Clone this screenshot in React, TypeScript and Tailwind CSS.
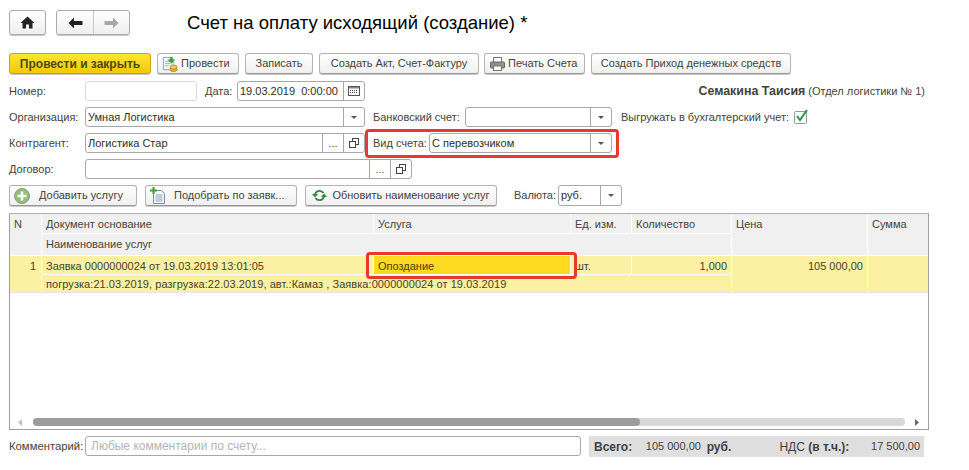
import type { ReactNode } from 'react'

function Btn({ w, children, className = '' }: { w: string; children: ReactNode; className?: string }) {
  return (
    <div className={`${w} h-full flex items-center justify-center gap-[3px] shrink-0 whitespace-nowrap rounded-[3px] border border-[#b4b4b4] border-b-[#999] bg-gradient-to-b from-white to-[#f0f0f0] shadow-[0_1px_0_#c8c8c8] text-[#44443a] ${className}`}>
      {children}
    </div>
  )
}

function Label({ w, children, className = '' }: { w: string; children: ReactNode; className?: string }) {
  return <div className={`${w} shrink-0 text-[#44443a] leading-[20px] whitespace-nowrap ${className}`}>{children}</div>
}

function Arrow() {
  return (
    <svg width="8" height="5" viewBox="0 0 8 5">
      <path d="M1 1h6L4 4z" fill="#555" />
    </svg>
  )
}

function CopyIcon() {
  return (
    <svg width="10" height="10" viewBox="0 0 10 10" fill="none" stroke="#444">
      <rect x="3.500" y="0.500" width="6" height="6" fill="white" />
      <rect x="0.500" y="3.500" width="6" height="6" fill="white" />
    </svg>
  )
}

function CalendarIcon() {
  return (
    <svg width="12" height="10" viewBox="0 0 12 10">
      <rect x="0.500" y="0.500" width="11" height="9" fill="white" stroke="#555" />
      <rect x="1" y="1" width="10" height="1.500" fill="#888" />
      <path d="M2 4h1v1H2zM4 4h1v1H4zM6 4h1v1H6zM8 4h1v1H8zM2 6h1v1H2zM4 6h1v1H4zM6 6h1v1H6zM8 6h1v1H8z" fill="#444" />
    </svg>
  )
}

// input with the small square buttons on its right edge
function Field({ w, text, parts = [], placeholder, light }: { w: string; text?: string; parts?: ReactNode[]; placeholder?: string; light?: boolean }) {
  return (
    <div className={`${w} h-full flex shrink-0 rounded-[3px] border bg-white ${light ? 'border-[#dcdcdc]' : 'border-[#a8a8a8]'}`}>
      <div className="flex-1 min-w-0 pl-[2px] leading-[18px] text-[#2f2f28] whitespace-pre overflow-hidden">
        {text}
        {placeholder && <span className="pl-[3px] text-[12px] text-[#b4b4b4]">{placeholder}</span>}
      </div>
      {parts.map((p, i) => (
        <div key={i} className="w-[21px] shrink-0 flex items-center justify-center border-l border-[#a8a8a8]">
          {p}
        </div>
      ))}
    </div>
  )
}

const dots = <span className="text-[#555] leading-[24px]">...</span>

function HomeIcon() {
  return (
    <svg width="15" height="13" viewBox="0 0 15 13">
      <path d="M7.500 0.500L0.500 7h2v5.500h3.500V8.500h3v4h3.500V7h2z" fill="#222" />
    </svg>
  )
}

function PostIcon() {
  return (
    <svg width="16" height="16" viewBox="0 0 18 18">
      <path d="M1.500 1.500h8l3 3v11h-11z" fill="#f4f8fc" stroke="#8a9bb0" />
      <path d="M3.500 6h6M3.500 8.500h6M3.500 11h4" stroke="#9ab" />
      <path d="M9 1h3v3h3l-4.500 4.500L6 4h3z" fill="#3f9e3a" />
      <ellipse cx="13" cy="15" rx="4" ry="2.500" fill="#e3b52e" stroke="#b78a14" />
      <ellipse cx="13" cy="12.500" rx="4" ry="2.300" fill="#f3cf52" stroke="#b78a14" />
    </svg>
  )
}

function PrintIcon() {
  return (
    <svg width="15" height="14" viewBox="0 0 15 14">
      <rect x="3.500" y="0.500" width="8" height="5" fill="#fff" stroke="#777" />
      <rect x="0.500" y="5" width="14" height="6" rx="1" fill="#8f8f8f" stroke="#666" />
      <rect x="3.500" y="9" width="8" height="4.500" fill="#fff" stroke="#777" />
      <rect x="11.500" y="6.500" width="1.500" height="1" fill="#e8a040" />
    </svg>
  )
}

function AddIcon() {
  return (
    <svg width="16" height="16" viewBox="0 0 16 16">
      <circle cx="8" cy="8" r="7.500" fill="#8fbf78" stroke="#8d9d86" />
      <path d="M6.700 3.500h2.600v3.200h3.200v2.600H9.300v3.200H6.700V9.300H3.500V6.700h3.200z" fill="#fff" />
    </svg>
  )
}

function PickIcon() {
  return (
    <svg width="16" height="17" viewBox="0 0 16 17">
      <path d="M3.500 3.500h8l3 3v10h-11z" fill="#f2f6fa" stroke="#7f8fa0" />
      <path d="M5.500 8h7M5.500 10h7M5.500 12h7M5.500 14h7" stroke="#8fa3b8" />
      <path d="M2.500 0h2v2.500h2.500v2H4.500V7h-2V4.500H0v-2h2.500z" fill="#3fa02e" />
    </svg>
  )
}

function RefreshIcon() {
  return (
    <svg width="15" height="13" viewBox="0 0 15 13" fill="none">
      <path d="M3 5.500A4.700 4.700 0 0 1 11.500 4" stroke="#2e8b3a" strokeWidth="1.800" />
      <path d="M12 7.500A4.700 4.700 0 0 1 3.500 9" stroke="#2e8b3a" strokeWidth="1.800" />
      <path d="M0 5h6L3 8.500z" fill="#2e8b3a" />
      <path d="M15 8H9l3-3.500z" fill="#2e8b3a" />
    </svg>
  )
}

const cellHead = 'bg-[#f0f0f0] pl-[4px] text-[#44443a] leading-[20px] whitespace-nowrap overflow-hidden'
const cellData = 'bg-[#fbf0a4] text-[#44442a] whitespace-nowrap'

export default function App() {
  return (
    <div className="relative w-[969px] h-[470px] overflow-hidden bg-white pl-[9px] pt-[10px] text-[11px] font-['Liberation_Sans',Arial,sans-serif]">
      {/* top bar */}
      <div className="flex items-center h-[25px]">
        <div className="w-[37px] h-full flex items-center justify-center rounded-[3px] border border-[#aaa] bg-gradient-to-b from-white to-[#efefef] shadow-[0_1px_0_#c8c8c8]">
          <HomeIcon />
        </div>
        <div className="ml-[10px] w-[74px] h-full flex rounded-[3px] border border-[#aaa] bg-gradient-to-b from-white to-[#efefef] shadow-[0_1px_0_#c8c8c8]">
          <div className="w-[37px] flex items-center justify-center border-r border-[#c8c8c8]">
            <svg width="15" height="12" viewBox="0 0 15 12"><path d="M6 0.500v3.500h8.500v4H6v3.500L0.500 6z" fill="#222" /></svg>
          </div>
          <div className="flex-1 flex items-center justify-center">
            <svg width="15" height="12" viewBox="0 0 15 12"><path d="M9 0.500v3.500H0.500v4H9v3.500L14.500 6z" fill="#a8a8a8" /></svg>
          </div>
        </div>
        <div className="ml-[57px] mt-[1px] text-[18.500px] text-black whitespace-nowrap">Счет на оплату исходящий (создание) *</div>
      </div>

      {/* command bar */}
      <div className="mt-[18px] h-[21px] flex gap-[6px]">
        <div className="w-[142px] h-full flex items-center justify-center rounded-[3px] border border-[#c9a20c] bg-gradient-to-b from-[#fde62f] to-[#f2c800] shadow-[0_1px_0_#c8c8c8] text-[12px] font-bold text-[#4f4a10]">
          Провести и закрыть
        </div>
        <Btn w="w-[82px]" className="!justify-start pl-[4px]"><PostIcon />Провести</Btn>
        <Btn w="w-[68px]">Записать</Btn>
        <Btn w="w-[160px]">Создать Акт, Счет-Фактуру</Btn>
        <Btn w="w-[101px]" className="-ml-[1px] !justify-start pl-[5px]"><PrintIcon />Печать Счета</Btn>
        <Btn w="w-[200px]">Создать Приход денежных средств</Btn>
      </div>

      {/* form rows */}
      <div className="mt-[7px] h-[20px] flex">
        <Label w="w-[76px]">Номер:</Label>
        <Field w="w-[112px]" light />
        <Label w="w-[32px]" className="ml-[8px]">Дата:</Label>
        <Field w="w-[128px]" text="19.03.2019  0:00:00" parts={[<CalendarIcon />]} />
        <div className="w-[560px] text-right leading-[20px] text-[#44443a] whitespace-nowrap">
          <b className="text-[12.400px]">Семакина Таисия</b> (Отдел логистики № 1)
        </div>
      </div>

      <div className="mt-[6px] h-[20px] flex">
        <Label w="w-[76px]">Организация:</Label>
        <Field w="w-[280px]" text="Умная Логистика" parts={[<Arrow />]} />
        <Label w="w-[92px]" className="ml-[8px]">Банковский счет:</Label>
        <Field w="w-[147px]" parts={[<Arrow />]} />
        <Label w="w-[173px]" className="ml-[9px]">Выгружать в бухгалтерский учет:</Label>
        <svg width="15" height="15" viewBox="0 0 15 15" className="shrink-0 mt-[2px]">
          <rect x="0.500" y="2.500" width="12" height="12" rx="1" fill="white" stroke="#999" />
          <path d="M3 7l3 4 7-10" fill="none" stroke="#1f9a3c" strokeWidth="2" />
        </svg>
      </div>

      <div className="mt-[6px] h-[20px] flex">
        <Label w="w-[76px]">Контрагент:</Label>
        <Field w="w-[280px]" text="Логистика Стар" parts={[dots, <CopyIcon />]} />
        <Label w="w-[56px]" className="ml-[8px]">Вид счета:</Label>
        <Field w="w-[183px]" text="С перевозчиком" parts={[<Arrow />]} />
      </div>

      <div className="mt-[6px] h-[20px] flex">
        <Label w="w-[76px]">Договор:</Label>
        <Field w="w-[327px]" parts={[dots, <CopyIcon />]} />
      </div>

      {/* table commands */}
      <div className="mt-[6px] h-[21px] flex">
        <Btn w="w-[128px]" className="!justify-start pl-[4px] gap-[9px]"><AddIcon />Добавить услугу</Btn>
        <Btn w="w-[152px]" className="ml-[8px] !justify-start pl-[4px] gap-[8px]"><PickIcon />Подобрать по заявк...</Btn>
        <Btn w="w-[192px]" className="ml-[8px] gap-[5px]"><RefreshIcon />Обновить наименование услуг</Btn>
        <Label w="w-[44px]" className="ml-[17px]">Валюта:</Label>
        <Field w="w-[64px]" text="руб." parts={[<Arrow />]} />
      </div>

      {/* table */}
      <div className="mt-[7px] w-[920px] h-[217px] flex flex-col border border-[#a0a0a0] border-t-[#b0b0b0]">
        <div className="grid grid-cols-[31px_331px_196px_60px_99px_135px_60px] grid-rows-[19px_21px_18px_17px] gap-[1px] bg-white border-b border-[#e6e6e6]">
          <div className={`${cellHead} row-span-2`}>N</div>
          <div className={cellHead}>Документ основание</div>
          <div className={cellHead}>Услуга</div>
          <div className={cellHead}>Ед. изм.</div>
          <div className={cellHead}>Количество</div>
          <div className={`${cellHead} row-span-2`}>Цена</div>
          <div className={`${cellHead} row-span-2`}>Сумма</div>
          <div className={`${cellHead} col-span-4 leading-[21px]`}>Наименование услуг</div>

          <div className={`${cellData} row-span-2 text-right pr-[5px] leading-[20px]`}>1</div>
          <div className={`${cellData} pl-[4px] leading-[20px]`}>Заявка 0000000024 от 19.03.2019 13:01:05</div>
          <div className="bg-[#fdd920] pl-[4px] leading-[20px] text-[#4a4010]">Опоздание</div>
          <div className={`${cellData} pl-[4px] leading-[20px]`}>шт.</div>
          <div className={`${cellData} text-right pr-[4px] leading-[20px]`}>1,000</div>
          <div className={`${cellData} row-span-2 text-right pr-[4px] leading-[20px]`}>105 000,00</div>
          <div className={`${cellData} row-span-2`} />
          <div className={`${cellData} col-span-4 pl-[4px] leading-[19px] tracking-[0.06px]`}>погрузка:21.03.2019, разгрузка:22.03.2019, авт.:Камаз , Заявка:0000000024 от 19.03.2019</div>
        </div>
        <div className="flex-1" />
        <div className="mb-[3px] h-[8px] flex items-center">
          <svg width="5" height="7" viewBox="0 0 5 7" className="ml-[8px] mr-[10px]"><path d="M4 0v7L0 3.500z" fill="#c0c0c0" /></svg>
          <div className="w-[872px] h-full rounded-full bg-[#d8d8d8]">
            <div className="w-[607px] h-full rounded-full bg-[#9c9c9c]" />
          </div>
          <svg width="5" height="7" viewBox="0 0 5 7" className="ml-[9px]"><path d="M1 0v7l4-3.500z" fill="#666" /></svg>
        </div>
      </div>

      {/* footer */}
      <div className="mt-[6px] h-[20px] flex">
        <Label w="w-[76px]" className="text-[#3a3a2a] text-[11.300px]">Комментарий:</Label>
        <Field w="w-[496px]" placeholder="Любые комментарии по счету..." />
        <div className="ml-[8px] w-[335px] h-[21px] shrink-0 flex items-center bg-[#dfdfdf] pl-[5px] pr-[4px] text-[#3f3f3f] whitespace-nowrap">
          <b className="w-[52px] text-[12px]">Всего:</b>
          <span className="w-[61px]">105 000,00</span>
          <b className="w-[73px] text-[12px]">руб.</b>
          <span className="w-[92px] text-[12px]">НДС <b>(в т.ч.):</b></span>
          <span className="flex-1 text-right">17 500,00</span>
        </div>
      </div>

      {/* red highlights drawn over the form */}
      <div className="absolute left-[365px] top-[129px] w-[254px] h-[29px] rounded-[4px] border-[3px] border-[#e8392d]" />
      <div className="absolute left-[366px] top-[252px] w-[211px] h-[27px] rounded-[4px] border-[3px] border-[#e8392d]" />
    </div>
  )
}
